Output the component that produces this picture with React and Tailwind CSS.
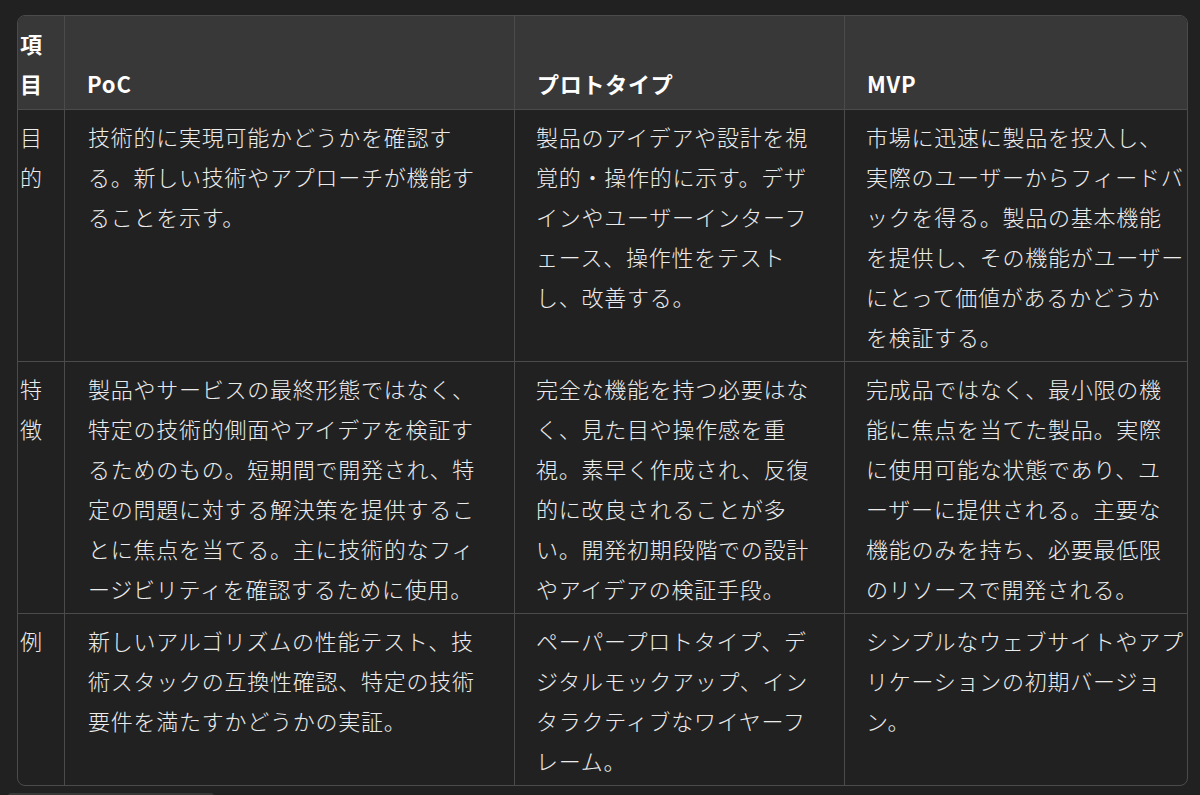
const FONT = { fontFamily: '"Noto Sans CJK JP", "Noto Sans", sans-serif' };

const header = ["PoC", "プロトタイプ", "MVP"];

const rows = [
  {
    label: ["目", "的"],
    cells: [
      ["技術的に実現可能かどうかを確認す", "る。新しい技術やアプローチが機能す", "ることを示す。"],
      ["製品のアイデアや設計を視", "覚的・操作的に示す。デザ", "インやユーザーインターフ", "ェース、操作性をテスト", "し、改善する。"],
      ["市場に迅速に製品を投入し、", "実際のユーザーからフィードバ", "ックを得る。製品の基本機能", "を提供し、その機能がユーザー", "にとって価値があるかどうか", "を検証する。"],
    ],
  },
  {
    label: ["特", "徴"],
    cells: [
      ["製品やサービスの最終形態ではなく、", "特定の技術的側面やアイデアを検証す", "るためのもの。短期間で開発され、特", "定の問題に対する解決策を提供するこ", "とに焦点を当てる。主に技術的なフィ", "ージビリティを確認するために使用。"],
      ["完全な機能を持つ必要はな", "く、見た目や操作感を重", "視。素早く作成され、反復", "的に改良されることが多", "い。開発初期段階での設計", "やアイデアの検証手段。"],
      ["完成品ではなく、最小限の機", "能に焦点を当てた製品。実際", "に使用可能な状態であり、ユ", "ーザーに提供される。主要な", "機能のみを持ち、必要最低限", "のリソースで開発される。"],
    ],
  },
  {
    label: ["例"],
    cells: [
      ["新しいアルゴリズムの性能テスト、技", "術スタックの互換性確認、特定の技術", "要件を満たすかどうかの実証。"],
      ["ペーパープロトタイプ、デ", "ジタルモックアップ、イン", "タラクティブなワイヤーフ", "レーム。"],
      ["シンプルなウェブサイトやアプ", "リケーションの初期バージョ", "ン。"],
    ],
  },
];

function Lines({ lines }) {
  return lines.map((l, i) => (
    <div key={i} className="whitespace-nowrap">{l}</div>
  ));
}

export default function App() {
  return (
    <div
      className="h-[795px] overflow-hidden bg-[#212121] pl-[17px] pr-[12px] pt-[15px] text-[22px] font-light leading-[40px] tracking-[0.75px] text-[#ececec]"
      style={FONT}
    >
      <div className="overflow-hidden rounded-[8px] border border-[#4b4b4b]">
        <div className="grid grid-cols-[47px_450px_330px_1fr]">
          {/* header */}
          <div className="flex flex-col justify-end border-b border-r border-[#4b4b4b] bg-[#383838] pb-[6px] pl-[2px] pt-[7px] font-bold text-white">
            <Lines lines={["項", "目"]} />
          </div>
          {header.map((h, i) => (
            <div
              key={h}
              className={
                "flex flex-col justify-end border-b border-[#4b4b4b] bg-[#383838] pb-[6px] pl-[22px] pt-[7px] font-bold text-white " +
                (i < 2 ? "border-r" : "")
              }
            >
              {h}
            </div>
          ))}

          {/* body */}
          {rows.map((r, ri) => {
            const last = ri === rows.length - 1;
            return [
              <div
                key={"l" + ri}
                className={"border-r border-[#4b4b4b] pb-[5px] pl-[2px] pt-[6px] " + (last ? "" : "border-b")}
              >
                <Lines lines={r.label} />
              </div>,
              ...r.cells.map((c, ci) => (
                <div
                  key={ri + "-" + ci}
                  className={
                    "border-[#4b4b4b] pb-[5px] pt-[6px] " +
                    (ci === 0 ? "pl-[23px] " : "pl-[21px] ") +
                    (ci < 2 ? "border-r " : "") +
                    (last ? "" : "border-b")
                  }
                >
                  <Lines lines={c} />
                </div>
              )),
            ];
          })}
        </div>
      </div>
      <div className="ml-[-9px] mt-[7px] h-[6px] w-[206px] rounded-full bg-[#383838]" />
    </div>
  );
}
